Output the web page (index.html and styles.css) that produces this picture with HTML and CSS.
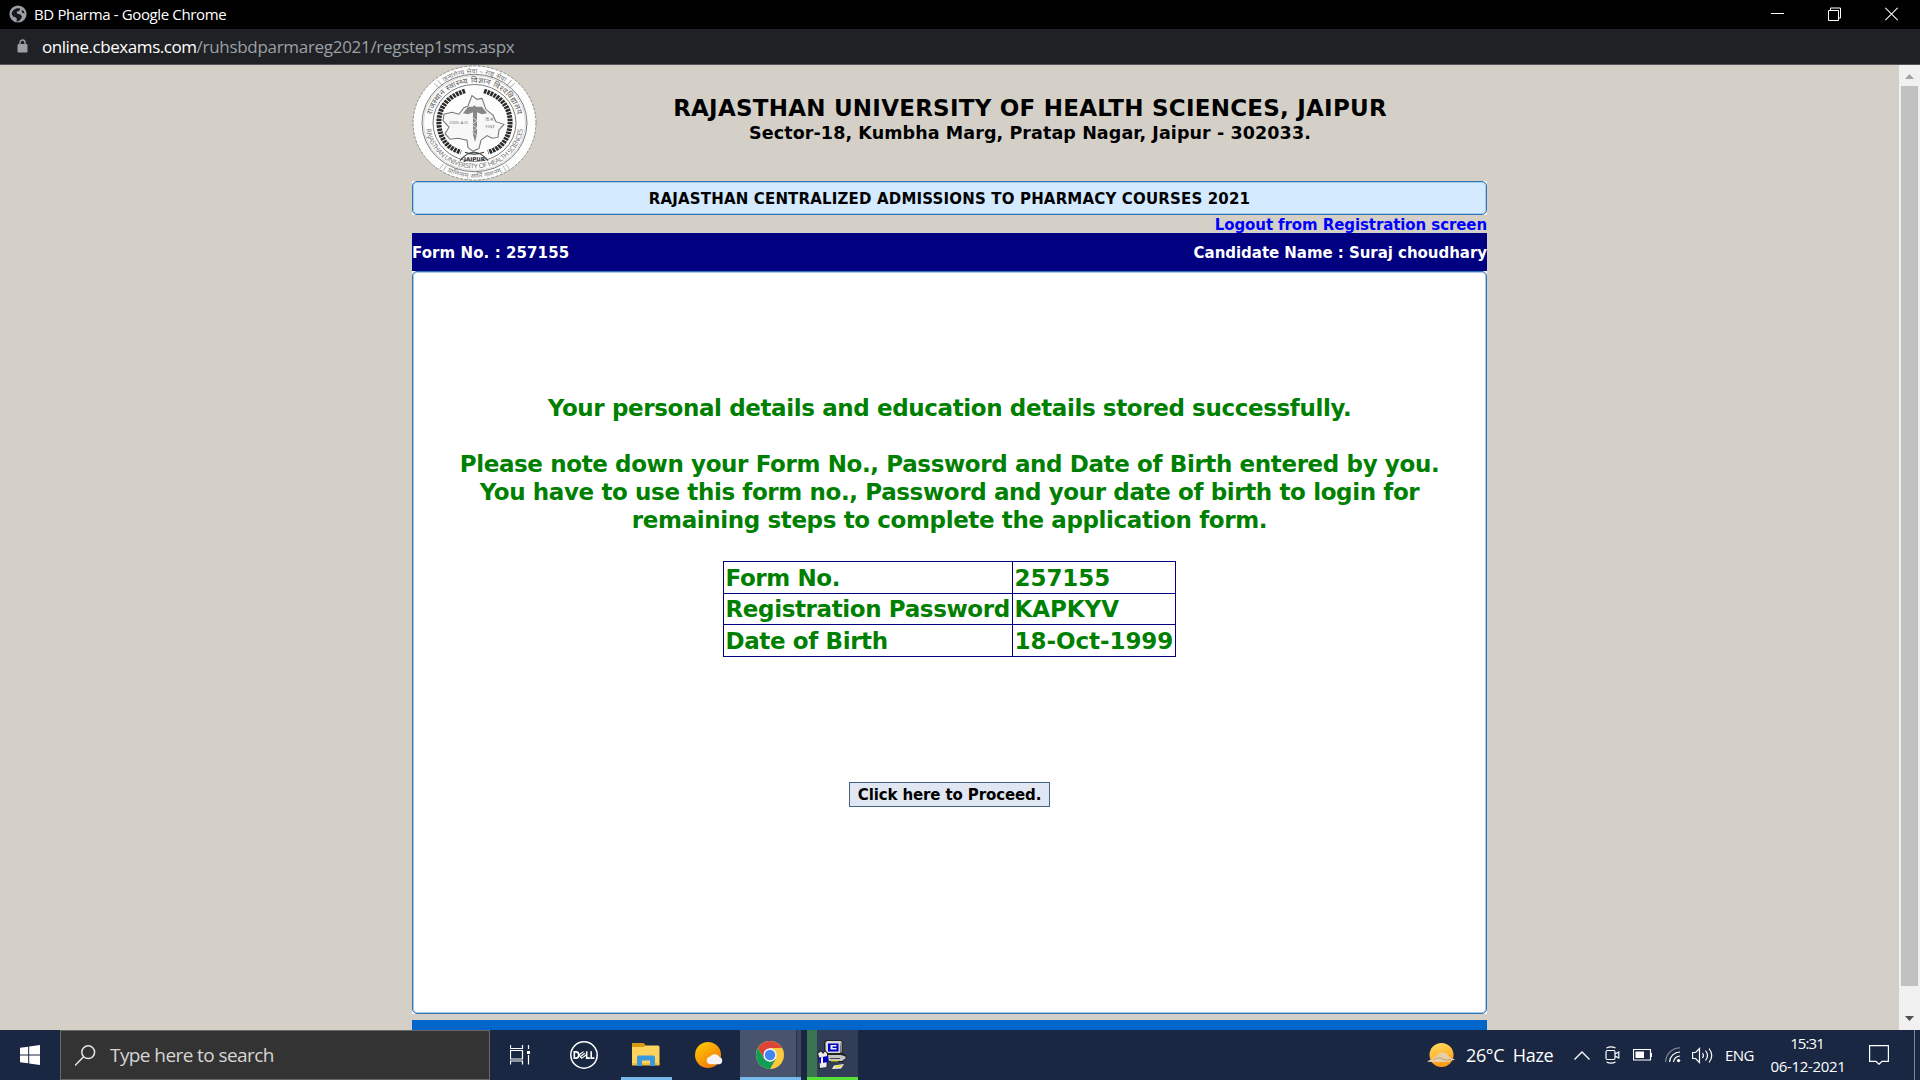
FILE: index.html
```html
<!DOCTYPE html>
<html lang="en">
<head>
<meta charset="utf-8">
<title>BD Pharma</title>
<link rel="stylesheet" href="styles.css">
</head>
<body>
<div class="screen">
  <header class="titlebar">
    <svg class="globe" width="18" height="18" viewBox="0 0 18 18"><circle cx="9" cy="9" r="8.6" fill="#9aa0a6"/><path d="M2.500 8.500Q4 4 8 3.200l3.500.3-1.200 2.200-2.800 1.300 1 1.800 3 .7 1.500 2-1 2.500-2.500 2.300-2.200.2.700-2.500-1.500-1.800-2.500-.7zM12.500 5l2.300 1 .7 2.500-2.300-.7z" fill="#17181a"/></svg>
    <span class="window-title">BD Pharma - Google Chrome</span>
    <div class="window-controls">
      <svg width="13" height="14" viewBox="0 0 13 14"><path d="M0 6.500h13" stroke="#fff"/></svg>
      <svg width="13" height="14" viewBox="0 0 13 14"><path d="M.5 3.500h10v10H.5zM2.500 3V1h10v10H11" fill="none" stroke="#fff"/></svg>
      <svg width="13" height="14" viewBox="0 0 13 14"><path d="m.3.800 12.400 12.400M12.700.800.3 13.200" stroke="#fff" stroke-width="1.100"/></svg>
    </div>
  </header>
  <div class="addressbar">
    <svg class="lock" width="11" height="14" viewBox="0 0 11 14"><path d="M1.500 5h8q1 0 1 1v6.500q0 1-1 1h-8q-1 0-1-1V6q0-1 1-1z" fill="#9aa0a6"/><path d="M3 5.500V3.500a2.500 2.500 0 0 1 5 0v2" fill="none" stroke="#9aa0a6" stroke-width="1.400"/></svg>
    <span class="host">online.cbexams.com</span><span class="path">/ruhsbdparmareg2021/regstep1sms.aspx</span>
  </div>

  <div class="viewport">
    <main class="page">
      <div class="masthead">
        <svg class="seal" width="125" height="116" viewBox="0 0 125 125" preserveAspectRatio="none">
          <defs>
            <path id="arc-out" d="M9 62.500a53.500 53.500 0 0 1 107 0"/>
            <path id="arc-in" d="M19 62.500a43.500 43.500 0 0 1 87 0"/>
            <path id="arc-low" d="M13.500 62.500a49 49 0 0 0 98 0"/>
            <path id="arc-foot" d="M3.500 62.500a59 59 0 0 0 118 0"/>
          </defs>
          <circle cx="62.500" cy="62.500" r="61.500" fill="#fdfdfd" stroke="#888" stroke-dasharray="3 1.500"/>
          <g fill="none" stroke="#777"><circle cx="62.500" cy="62.500" r="52.500"/><circle cx="62.500" cy="62.500" r="51" stroke="#bbb" stroke-width=".6"/><circle cx="62.500" cy="62.500" r="41.500"/></g>
          <g class="seal-text">
            <text font-size="7"><textPath href="#arc-out" startOffset="50%" textLength="84">|| जनारोग्य सेवा – राष्ट्र सेवा ||</textPath></text>
            <text class="seal-hindi" font-size="8"><textPath href="#arc-in" startOffset="50%" textLength="118">राजस्थान स्वास्थ्य विज्ञान विश्वविद्यालय</textPath></text>
            <text font-size="7"><textPath href="#arc-low" startOffset="50%" textLength="140">RAJASTHAN UNIVERSITY OF HEALTH SCIENCES</textPath></text>
            <text font-size="6.500"><textPath href="#arc-foot" startOffset="50%" textLength="76">|| प्राणिनाम् आर्ति नाशनम् ||</textPath></text>
          </g>
          <g fill="none" stroke="#2c2c2c" stroke-width="5" stroke-dasharray="2.600 .900"><path d="M53 28C34 34 26 48 27 64s9 26 22 30"/><path d="M72 28c19 6 27 20 26 36s-9 26-22 30"/></g>
          <path d="m32 53 8-2 7 2 5-7 4-2 4-11 5 4 5-1 4 12 7 6 3 7 8 3-5 6-1 8-6 1-5-3-6 5-2 9-6 3-5-4-1-8-9-2-8 1-5-6 4-7-6-7z" fill="#f7f7f7" stroke="#777" stroke-width="1.100"/>
          <path d="m51 52 5-7h5l1-2 2 2h6l5 7-5 1-5-2v24l-2 8-2-8V51l-5 2z" fill="#888"/><path d="m60 56 5 4-5 4 5 4-5 4 5 4" fill="none" stroke="#ddd"/>
          <g class="seal-text" font-size="4.500"><text x="47" y="64">2005 A.D.</text><text x="78" y="60">वि.सं.</text><text x="78" y="68">२०६१</text></g>
          <path d="M48 103q14-18 28 0M53 94q9 4 19 0" fill="none" stroke="#444" stroke-width="1.200"/>
          <text class="seal-city" x="62.500" y="103">JAIPUR</text>
        </svg>
        <div class="university">
          <h1>RAJASTHAN UNIVERSITY OF HEALTH SCIENCES, JAIPUR</h1>
          <p>Sector-18, Kumbha Marg, Pratap Nagar, Jaipur - 302033.</p>
        </div>
      </div>
      <div class="corners"><div class="banner rounded">RAJASTHAN CENTRALIZED ADMISSIONS TO PHARMACY COURSES 2021</div></div>
      <div class="logout"><a>Logout from Registration screen</a></div>
      <div class="candidate-bar"><span class="form-no">Form No. : 257155</span><span class="candidate">Candidate Name : Suraj choudhary</span></div>
      <div class="corners">
        <section class="panel rounded">
          <p>Your personal details and education details stored successfully.</p>
          <p class="note">Please note down your Form No., Password and Date of Birth entered by you.<br>You have to use this form no., Password and your date of birth to login for<br>remaining steps to complete the application form.</p>
          <table>
            <tr><td>Form No.</td><td class="value">257155</td></tr>
            <tr><td>Registration Password</td><td class="value">KAPKYV</td></tr>
            <tr><td>Date of Birth</td><td class="value">18-Oct-1999</td></tr>
          </table>
          <button type="button">Click here to Proceed.</button>
        </section>
      </div>
      <div class="footer-bar"></div>
    </main>
    <div class="scrollbar">
      <svg width="9" height="5" viewBox="0 0 9 5"><path d="M4.500 0 9 5H0z" fill="#a3a3a3"/></svg>
      <div class="thumb"></div>
      <svg width="9" height="5" viewBox="0 0 9 5"><path d="M0 0h9L4.500 5z" fill="#505050"/></svg>
    </div>
  </div>

  <footer class="taskbar">
    <div class="start"><svg width="20" height="20" viewBox="0 0 20 20"><path d="m0 2.800 8.200-1.100v7.800H0zM9.200 1.500 20 0v9.500H9.200zM0 10.500h8.200v7.800L0 17.200zM9.200 10.500H20V20L9.200 18.500z" fill="#fff"/></svg></div>
    <div class="search"><svg width="21" height="21" viewBox="0 0 21 21"><path d="M0 20.500 8.300 12" stroke="#e8e8e8" stroke-width="1.500"/><circle cx="13.200" cy="7.200" r="6.400" fill="none" stroke="#e8e8e8" stroke-width="1.500"/></svg><span>Type here to search</span></div>
    <div class="app"><svg width="20" height="20" viewBox="0 0 20 20"><path d="M.5 0v3.500h12V0M.5 19.500V16h12v3.500M.5 5.500h12v8.500H.5zM18.500 0v4M18.500 10v9.500" fill="none" stroke="#fff" stroke-width="1.200"/><path d="M17 6h3v3h-3z" fill="#fff"/></svg></div>
    <div class="app dell"><svg width="28" height="28" viewBox="0 0 28 28"><circle cx="14" cy="14" r="13.200" fill="none" stroke="#fff" stroke-width="1.500"/><g fill="none" stroke="#fff" stroke-width="1.600"><path d="M4.300 10.900h1.500q3 0 3 3.100t-3 3.100H4.300zM16.700 10.200v6.900h3.200M21.200 10.200v6.900h3.200"/><path d="m9 14 4.500-3.400M10.300 15.700l4.500-3.400M11.600 17.400l4.500-3.400M9 14l2.600 3.400" stroke-width="1.100"/></g></svg></div>
    <div class="app folder"><svg width="28" height="24" viewBox="0 0 28 24"><path d="M0 1.500Q0 .3 1 .3h10q1 0 1.500 1l.8 1.200H26q1.500 0 1.500 1.500v17.500H0z" fill="#ffd35c"/><path d="M0 1.500Q0 .3 1 .3h10q1 0 1.500 1l.8 1.200-1.500 1.500H0z" fill="#d89a0c"/><path d="M0 20h27.500v2.500H0z" fill="#f5bc3d"/><path d="M5 23V14q0-1.500 1.500-1.500h15q1.500 0 1.500 1.500v9h-5v-5.500h-8V23z" fill="#3a98dc"/></svg></div>
    <div class="app weather-app"><svg width="28" height="27" viewBox="0 0 28 27"><defs><linearGradient id="sun" x1="0" y1="0" x2=".7" y2="1"><stop stop-color="#ffd000"/><stop offset="1" stop-color="#f4770b"/></linearGradient></defs><circle cx="13" cy="13" r="13" fill="url(#sun)"/><path d="M15 22.300a4 4 0 0 1 .2-7.900 5.600 5.600 0 0 1 9.500.9 3.600 3.600 0 0 1-.5 7z" fill="#f3f3f5"/></svg></div>
    <div class="app chrome"><svg width="28" height="28" viewBox="0 0 28 28"><circle cx="14" cy="14" r="14" fill="#fbc93c"/><path d="M1.900 7A14 14 0 0 1 26.100 7H14L8 17.500z" fill="#db4437"/><path d="M1.900 7A14 14 0 0 0 14 28l6-10.500-6 3.500-6-3.500z" fill="#0f9d58"/><circle cx="14" cy="14" r="6.700" fill="#f2f2f2"/><circle cx="14" cy="14" r="5.200" fill="#4285f4"/></svg></div>
    <div class="app installer"><svg width="30" height="30" viewBox="0 0 30 30"><path d="M9 0h15l1.500 1.500V13l4 2.500v3L26 22H12v-7H7V2z" fill="#222"/><path d="M8.500 2.500 10 1h14l-1 12H8.500z" fill="#d8d8d8"/><path d="M24 1.500h1v11h-2z" fill="#888"/><path d="M11 3.500h10.500v8H11z" fill="#0000c8"/><path d="M13.500 5h6v1.500h-4V8h4v1.500h-6z" fill="#eee"/><path d="M11 15h13l4.500 1.500v2L25 21H12z" fill="#c4c4c4"/><path d="M13 18h10v1H13z" fill="#444"/><path d="M14 20.500h7v1h-7z" fill="#e5dd00"/><path d="m0 13 4-3 2 3 2-3 3 3-.5 14L2 29 1 16z" fill="#222"/><path d="m1 13.500 3-2 2 2.500 2-2.500 2 2L9.500 27 3 28 2 16z" fill="#ececec"/><path d="M2 17.500 11 16v6l-8.500 1.500z" fill="#0000c8"/><path d="M4 17.500 6 17v6l-2 .5z" fill="#fff"/><path d="m17 25.500 10-1.500-3 4.500-9 .5z" fill="#eee"/><path d="m19 26 6-1-1.500 2-6 .5z" fill="#e5dd00"/></svg></div>
    <div class="tray">
      <svg class="haze" width="28" height="24" viewBox="0 0 28 24"><defs><linearGradient id="haze" x1="0" y1="0" x2=".3" y2="1"><stop stop-color="#ffe066"/><stop offset="1" stop-color="#ff9c12"/></linearGradient></defs><circle cx="14.500" cy="12" r="12" fill="url(#haze)"/><path d="M0 18.500q2-1.500 5-2 1-3 4.500-3 2-4 6.500-4 4 0 5.500 4 3 .3 3 2 3 .3 3.500 1.500l-6 .5q2 1 1 1.500H4z" fill="#e9cfa9"/><path d="M6 16.500q6-3 10-.5t8 0" fill="none" stroke="#c9a67c" stroke-width="1.200"/></svg>
      <span class="temperature">26°C&nbsp; Haze</span>
      <svg class="chevron" width="16" height="9" viewBox="0 0 16 9"><path d="m.5 8.500 7.500-7.500 7.500 7.500" fill="none" stroke="#fff" stroke-width="1.300"/></svg>
      <svg class="meet" width="15" height="18" viewBox="0 0 15 18"><path d="M2.500 4.500h6q1.500 0 1.500 1.500v6q0 1.500-1.500 1.500h-6Q1 13.500 1 12V6q0-1.500 1.500-1.500zM10 8l3.800-2v6L10 10M1.500 2Q6 -.3 10.500 2M1.500 16q4.500 2.300 9 0" fill="none" stroke="#fff" stroke-width="1.200"/></svg>
      <svg class="battery" width="19" height="12" viewBox="0 0 19 12"><path d="M.5.500h17v10.500H.5z" fill="none" stroke="#fff" stroke-width="1.200"/><path d="M2.500 2.500h8.500v6.500H2.500zM18 4h1v4h-1z" fill="#fff"/></svg>
      <svg class="wifi" width="16" height="16" viewBox="0 0 16 16"><g fill="none" stroke="#fff" stroke-width="1.200"><path d="M.6 15A14.500 14.500 0 0 1 15 .8" stroke="#78849a"/><path d="M4.500 15A10.500 10.500 0 0 1 15 5M8.500 15A6.500 6.500 0 0 1 15 9"/></g><circle cx="13.600" cy="13.600" r="1.700" fill="#fff"/></svg>
      <svg class="volume" width="21" height="17" viewBox="0 0 21 17"><path d="M.6 5.500h3L7.500 1.500v14l-3.900-4h-3zM10.500 6q1.800 2.500 0 5M13.500 3.500q4 5 0 10M17 1.500q5.500 7 0 14" fill="none" stroke="#fff" stroke-width="1.200"/></svg>
      <span class="language">ENG</span>
      <div class="clock"><span class="time">15:31</span><span class="date">06-12-2021</span></div>
      <svg class="notifications" width="20" height="20" viewBox="0 0 20 20"><path d="M.6.600h18.800v15.800H13L10 19.300 7 16.400H.6z" fill="none" stroke="#fff" stroke-width="1.200"/></svg>
      <div class="show-desktop"></div>
    </div>
  </footer>
</div>
</body>
</html>
```
FILE: styles.css
```css
* { box-sizing: border-box; }
body { margin: 0; font-family: "Open Sans", "Noto Sans", sans-serif; }
svg { display: block; flex: none; }
.screen { width: 1920px; height: 1080px; display: flex; flex-direction: column; overflow: hidden; }

/* Browser window frame */
.titlebar { height: 29px; background: #000; color: #fff; display: flex; align-items: center; padding: 0 22px 1px 9px; }
.window-title { margin-left: 7px; font-size: 15px; letter-spacing: -0.36px; white-space: nowrap; }
.window-controls { margin-left: auto; display: flex; gap: 44px; }
.addressbar { height: 36px; background: #202124; border-bottom: 1px solid #55575a; display: flex; align-items: center; padding-left: 17px; white-space: nowrap; font-size: 17px; }
.host { margin-left: 14px; color: #fff; letter-spacing: -0.44px; }
.path { color: #9aa0a6; letter-spacing: -0.3px; }
.lock { margin-top: -1px; }

/* Page */
.viewport { height: 965px; display: flex; background: #d4d0c8; overflow: hidden; }
.page { width: 1075px; margin-left: 412px; flex: none; font-family: "DejaVu Sans", sans-serif; font-weight: bold; font-size: 15px; }
.masthead { height: 116px; display: flex; }
.university { flex: 1; padding: 29px 0 0 36px; text-align: center; white-space: nowrap; }
.university h1 { margin: 0; font-size: 23px; line-height: 28px; letter-spacing: 0.24px; }
.university p { margin: 0; font-size: 17.5px; line-height: 22px; letter-spacing: 0.09px; }
.seal-text { fill: #777; text-anchor: middle; font-family: "Noto Sans", "Noto Sans Devanagari", sans-serif; font-weight: normal; }
.seal-hindi { fill: #555; }
.seal-city { font-size: 5.5px; text-anchor: middle; fill: #222; }
.corners { background: #fff; }
.rounded { border: 1px solid #2f75b5; border-radius: 5px; box-shadow: inset 0 0 0 1px #a9cbe8; }
.banner { height: 34px; line-height: 34px; background: #d3eaff; text-align: center; letter-spacing: 0.17px; }
.logout { height: 18px; line-height: 20px; text-align: right; color: #00f; letter-spacing: -0.09px; }
.candidate-bar { height: 38px; line-height: 40px; background: #000080; color: #fff; display: flex; justify-content: space-between; }
.form-no { letter-spacing: 0.08px; }
.candidate { letter-spacing: -0.04px; }
.panel { height: 743px; padding-top: 122px; background: #fff; color: #008000; font-size: 23px; line-height: 28px; letter-spacing: -0.38px; display: flex; flex-direction: column; align-items: center; text-align: center; }
.panel p { margin: 0; white-space: nowrap; }
.panel .note { margin-top: 28px; }
.panel table { margin-top: 27px; border-collapse: collapse; text-align: left; width: 453px; height: 96px; table-layout: fixed; }
.panel td { border: 1px solid #000080; padding: 1px 0 0 1.5px; height: 31.5px; white-space: nowrap; }
.panel .value { width: 163px; letter-spacing: -0.05px; }
.panel button { margin-top: 125px; width: 201px; height: 25px; padding: 0; border: 1px solid #3f6384; background: #e1e7f2; color: #000; font: inherit; font-size: 15px; line-height: 22px; letter-spacing: -0.12px; }
.footer-bar { height: 10px; margin-top: 6px; background: #0066cc; }
.scrollbar { width: 21px; margin-left: auto; background: #f1f1f1; display: flex; flex-direction: column; align-items: center; padding-top: 9px; }
.thumb { width: 17px; height: 900px; margin: 7px 0 30px; background: #c1c1c1; }

/* Taskbar */
.taskbar { height: 50px; background: #1a2742; color: #fff; display: flex; }
.start { width: 60px; display: grid; place-items: center; }
.search { width: 430px; background: #333; border: 1px solid #686868; display: flex; align-items: center; padding-left: 14px; gap: 14px; font-size: 19px; letter-spacing: -0.58px; color: #d5d5d5; }
.app { width: 60px; display: grid; place-items: center; }
.dell { margin-left: 4px; }
.folder { width: 51px; margin-left: 7px; border-bottom: 3px solid #76b9ed; padding-right: 2px; }
.weather-app { margin-left: 7px; }
.chrome { width: 61px; margin-left: 1px; background: linear-gradient(90deg, #48546d 56px, #28334c 56px 57px, #3b4760 57px); border-bottom: 3px solid #76b9ed; padding-right: 1px; }
.installer { width: 51px; margin-left: 6px; background: linear-gradient(90deg, #3b7450 10px, #323d57 10px); border-bottom: 3px solid #55e035; padding-right: 1px; }
.folder svg, .chrome svg, .installer svg { margin-top: 3px; }
.tray { margin-left: auto; display: flex; align-items: center; white-space: nowrap; font-size: 15px; }
.temperature { margin-left: 11px; width: 88px; font-size: 18px; letter-spacing: -0.36px; }
.chevron { margin-left: 20px; }
.meet { margin-left: 15px; }
.battery { margin-left: 13px; }
.wifi { margin-left: 13px; }
.volume { margin-left: 11px; }
.language { margin-left: 12px; width: 30px; letter-spacing: -0.6px; }
.clock { margin-left: 15px; width: 76px; display: flex; flex-direction: column; text-align: center; line-height: 23px; }
.time { letter-spacing: -0.9px; padding-right: 2px; }
.date { letter-spacing: -0.33px; }
.notifications { margin-left: 23px; }
.show-desktop { width: 6px; height: 50px; margin-left: 25px; border-left: 1px solid #7d8697; }
```
